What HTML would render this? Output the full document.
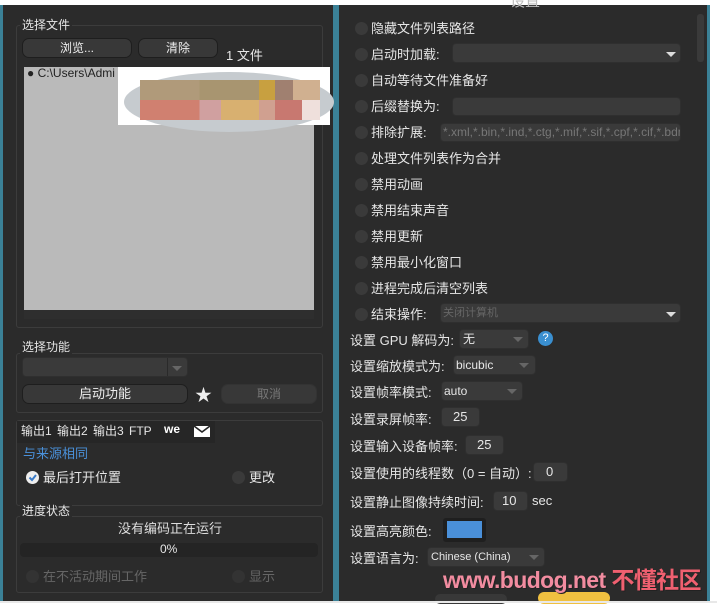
<!DOCTYPE html>
<html><head><meta charset="utf-8"><style>
*{box-sizing:border-box;margin:0;padding:0}
body{width:717px;height:603px;background:#fff;position:relative;overflow:hidden;font-family:"Liberation Sans","Noto Sans CJK SC",sans-serif;font-size:12px;color:#e6e6e6}
.a{position:absolute}
.panel{background:#2b2b2b}
.grp{position:absolute;border:1px solid #3c3c3c;border-radius:3px}
.btn{position:absolute;background:#383838;border:1px solid #1e1e1e;border-radius:7px;text-align:center;line-height:18px;color:#eee}
.rad{position:absolute;width:13px;height:13px;border-radius:50%;background:#3a3a3a}
.t{position:absolute;white-space:nowrap}
.inp{position:absolute;background:#3a3a3a;border-radius:4px;border:1px solid #2f2f2f}
.arr{position:absolute;width:0;height:0;border-left:5px solid transparent;border-right:5px solid transparent;border-top:5px solid #ddd}
.arr2{border-top-color:#666}
</style></head><body>
<div class="a" style="left:0;top:5px;width:710px;height:596px;background:#3b8197"></div>
<div class="a panel" style="left:3px;top:5px;width:330px;height:596px"></div>
<div class="a panel" style="left:339px;top:5px;width:368px;height:596px"></div>

<!-- Left -->
<div class="grp" style="left:16px;top:25px;width:307px;height:303px"></div>
<div class="t" style="left:20px;top:16px;background:#2b2b2b;padding:0 2px">选择文件</div>
<div class="btn" style="left:22px;top:38px;width:110px;height:20px">浏览...</div>
<div class="btn" style="left:138px;top:38px;width:80px;height:20px">清除</div>
<div class="t" style="left:226px;top:45px;font-size:13px">1 文件</div>
<div class="a" style="left:24px;top:67px;width:290px;height:243px;background:#bababa"></div>
<div class="a" style="left:24px;top:310px;width:290px;height:9px;background:#2e2e2e"></div>
<div class="t" style="left:27px;top:66px;color:#222;font-size:12px">● C:\Users\Admi</div>
<div class="a" style="left:118px;top:67px;width:212px;height:58px;background:#fff"></div>
<div class="a" style="left:124px;top:72px;width:210px;height:60px;background:#c6cbcf;border-radius:50%"></div>
<div class="a" style="left:140px;top:80px;width:180px;height:20px;background:linear-gradient(90deg,#b09a7a 0 33%,#a89570 33% 66%,#c8a040 66% 75%,#a08070 75% 85%,#d0b090 85%)"></div>
<div class="a" style="left:140px;top:100px;width:180px;height:20px;background:linear-gradient(90deg,#d08070 0 33%,#d0a0a0 33% 45%,#d8b070 45% 66%,#d0a090 66% 75%,#c87870 75% 90%,#efe0dc 90%)"></div>

<div class="grp" style="left:16px;top:353px;width:307px;height:60px"></div>
<div class="t" style="left:20px;top:338px;background:#2b2b2b;padding:0 2px">选择功能</div>
<div class="inp" style="left:22px;top:357px;width:166px;height:20px"></div>
<div class="a" style="left:167px;top:358px;width:1px;height:18px;background:#2a2a2a"></div>
<div class="arr arr2" style="left:172px;top:366px"></div>
<div class="btn" style="left:22px;top:384px;width:166px;height:20px;font-size:13px">启动功能</div>
<div class="t" style="left:195px;top:381px;font-size:17px;color:#eee">★</div>
<div class="btn" style="left:221px;top:384px;width:96px;height:20px;color:#777;border-color:#333">取消</div>

<div class="grp" style="left:16px;top:420px;width:307px;height:86px"></div>
<div class="a" style="left:17px;top:421px;width:198px;height:22px;background:#262626"></div>
<div class="t" style="left:21px;top:422px;font-size:12px;word-spacing:2px">输出1 输出2 输出3 FTP</div>
<div class="t" style="left:164px;top:422px;font-weight:bold;font-size:12px;color:#fff">we</div>
<svg class="a" style="left:194px;top:426px" width="16" height="12"><rect width="16" height="11" fill="#fff"/><path d="M0 0 L8 6 L16 0" stroke="#262626" stroke-width="1.6" fill="none"/></svg>
<div class="t" style="left:23px;top:443px;color:#4a90d9;font-size:13px">与来源相同</div>
<div class="a" style="left:26px;top:471px;width:13px;height:13px;border-radius:50%;background:#eee"></div>
<svg class="a" style="left:26px;top:471px" width="13" height="13"><path d="M3.5 6.5 L6 9 L10 4" stroke="#3a7bc8" stroke-width="2" fill="none"/></svg>
<div class="t" style="left:43px;top:467px;font-size:13px">最后打开位置</div>
<div class="rad" style="left:232px;top:471px"></div>
<div class="t" style="left:249px;top:467px;font-size:13px">更改</div>

<div class="grp" style="left:16px;top:516px;width:307px;height:77px"></div>
<div class="t" style="left:20px;top:502px;background:#2b2b2b;padding:0 2px">进度状态</div>
<div class="t" style="left:118px;top:518px;width:102px;text-align:center;font-size:13px;color:#ddd">没有编码正在运行</div>
<div class="a" style="left:20px;top:543px;width:298px;height:14px;background:#242424;border-radius:4px"></div>
<div class="t" style="left:160px;top:542px;font-size:12px">0%</div>
<div class="rad" style="left:26px;top:570px;background:#333"></div>
<div class="t" style="left:43px;top:566px;font-size:13px;color:#666">在不活动期间工作</div>
<div class="rad" style="left:232px;top:570px;background:#333"></div>
<div class="t" style="left:249px;top:566px;font-size:13px;color:#666">显示</div>

<!-- Right -->
<div class="t" style="left:510px;top:-10px;font-size:15px;color:#bbb">设置</div>
<div class="a" style="left:697px;top:14px;width:7px;height:48px;background:#3a3a3a;border-radius:3px"></div>
<div class="rad" style="left:355px;top:22px"></div><div class="t" style="left:371px;top:18px;font-size:13px">隐藏文件列表路径</div>
<div class="rad" style="left:355px;top:48px"></div><div class="t" style="left:371px;top:44px;font-size:13px">启动时加载:</div>
<div class="inp" style="left:452px;top:43px;width:229px;height:20px"></div><div class="arr" style="left:666px;top:52px"></div>
<div class="rad" style="left:355px;top:74px"></div><div class="t" style="left:371px;top:70px;font-size:13px">自动等待文件准备好</div>
<div class="rad" style="left:355px;top:100px"></div><div class="t" style="left:371px;top:96px;font-size:13px">后缀替换为:</div>
<div class="inp" style="left:452px;top:97px;width:229px;height:19px"></div>
<div class="rad" style="left:355px;top:126px"></div><div class="t" style="left:371px;top:122px;font-size:13px">排除扩展:</div>
<div class="inp" style="left:440px;top:123px;width:241px;height:19px;overflow:hidden;color:#777;font-size:12px;line-height:17px;padding-left:2px;white-space:nowrap">*.xml,*.bin,*.ind,*.ctg,*.mif,*.sif,*.cpf,*.cif,*.bdm</div>
<div class="rad" style="left:355px;top:152px"></div><div class="t" style="left:371px;top:148px;font-size:13px">处理文件列表作为合并</div>
<div class="rad" style="left:355px;top:178px"></div><div class="t" style="left:371px;top:174px;font-size:13px">禁用动画</div>
<div class="rad" style="left:355px;top:204px"></div><div class="t" style="left:371px;top:200px;font-size:13px">禁用结束声音</div>
<div class="rad" style="left:355px;top:230px"></div><div class="t" style="left:371px;top:226px;font-size:13px">禁用更新</div>
<div class="rad" style="left:355px;top:256px"></div><div class="t" style="left:371px;top:252px;font-size:13px">禁用最小化窗口</div>
<div class="rad" style="left:355px;top:282px"></div><div class="t" style="left:371px;top:278px;font-size:13px">进程完成后清空列表</div>
<div class="rad" style="left:355px;top:308px"></div><div class="t" style="left:371px;top:304px;font-size:13px">结束操作:</div>
<div class="inp" style="left:440px;top:303px;width:241px;height:20px;color:#666;font-size:11px;line-height:18px;padding-left:2px">关闭计算机</div><div class="arr" style="left:666px;top:312px"></div>

<div class="t" style="left:350px;top:330px;font-size:13px">设置 GPU 解码为:</div>
<div class="inp" style="left:459px;top:329px;width:70px;height:20px;line-height:18px;padding-left:3px">无</div><div class="arr arr2" style="left:513px;top:337px"></div>
<div class="a" style="left:538px;top:331px;width:15px;height:15px;border-radius:50%;background:#3a8fd0;color:#fff;font-size:11px;text-align:center;line-height:15px">?</div>
<div class="t" style="left:350px;top:356px;font-size:13px">设置缩放模式为:</div>
<div class="inp" style="left:453px;top:355px;width:83px;height:20px;line-height:18px;padding-left:2px">bicubic</div><div class="arr arr2" style="left:519px;top:363px"></div>
<div class="t" style="left:350px;top:382px;font-size:13px">设置帧率模式:</div>
<div class="inp" style="left:441px;top:381px;width:82px;height:20px;line-height:18px;padding-left:2px">auto</div><div class="arr arr2" style="left:507px;top:389px"></div>
<div class="t" style="left:350px;top:409px;font-size:13px">设置录屏帧率:</div>
<div class="inp" style="left:441px;top:407px;width:39px;height:20px;line-height:18px;padding-left:11px;font-size:13px">25</div>
<div class="t" style="left:350px;top:436px;font-size:13px">设置输入设备帧率:</div>
<div class="inp" style="left:465px;top:435px;width:39px;height:20px;line-height:18px;padding-left:11px;font-size:13px">25</div>
<div class="t" style="left:350px;top:463px;font-size:13px">设置使用的线程数（0 = 自动）:</div>
<div class="inp" style="left:533px;top:462px;width:35px;height:20px;line-height:18px;padding-left:12px;font-size:13px">0</div>
<div class="t" style="left:350px;top:492px;font-size:13px">设置静止图像持续时间:</div>
<div class="inp" style="left:493px;top:491px;width:35px;height:20px;line-height:18px;padding-left:8px;font-size:13px">10</div>
<div class="t" style="left:532px;top:493px;font-size:13px">sec</div>
<div class="t" style="left:350px;top:521px;font-size:13px">设置高亮颜色:</div>
<div class="a" style="left:443px;top:518px;width:43px;height:24px;background:#1f1f1f;border-radius:3px"></div>
<div class="a" style="left:447px;top:521px;width:35px;height:17px;background:#4a90d9"></div>
<div class="t" style="left:350px;top:548px;font-size:13px">设置语言为:</div>
<div class="inp" style="left:427px;top:547px;width:118px;height:20px;line-height:18px;padding-left:3px;font-size:11px">Chinese (China)</div><div class="arr arr2" style="left:529px;top:555px"></div>
<div class="a" style="left:435px;top:594px;width:72px;height:10px;background:#383838;border-radius:6px"></div>
<div class="a" style="left:538px;top:592px;width:72px;height:12px;background:#f0c040;border-radius:8px"></div>
<div class="t" style="left:443px;top:567px;font-size:23px;line-height:26px;font-weight:bold;color:#f28ca0;letter-spacing:-0.6px;text-shadow:1px 1px 0 #222">www.budog.net <span style="color:#f06070">不懂社区</span></div>
<div class="a" style="left:0;top:601px;width:717px;height:2px;background:#e8e8e8"></div>
</body></html>
